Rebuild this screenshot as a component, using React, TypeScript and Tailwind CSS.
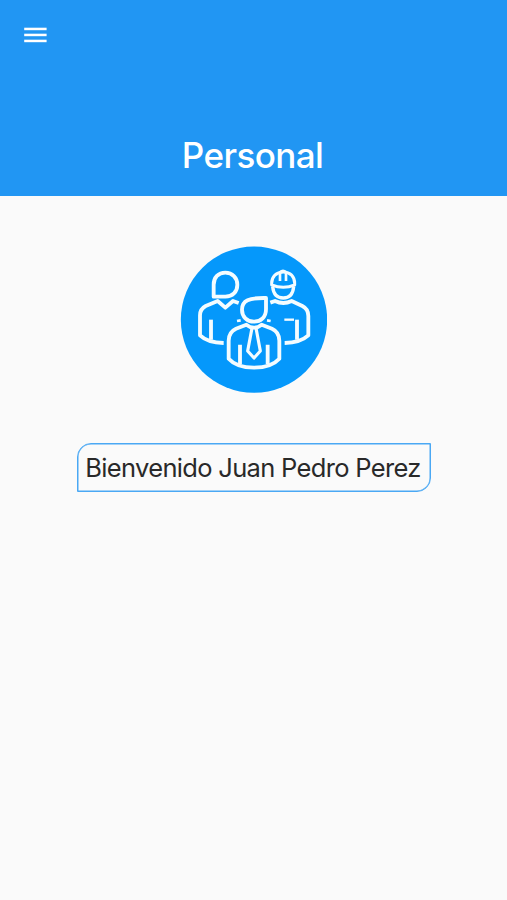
import React from 'react';

interface HeaderProps {
    title: string;
}

const MenuIcon: React.FC = () => (
    <svg viewBox="0 0 24 16" className="h-4 w-6" fill="#fff">
        <rect x="0.2" y="0.7" width="22.4" height="2.5" />
        <rect x="0.2" y="6.7" width="22.4" height="2.5" />
        <rect x="0.2" y="12.7" width="22.4" height="2.5" />
    </svg>
);

const Header: React.FC<HeaderProps> = ({ title }) => (
    <header className="flex h-[196px] flex-col justify-between bg-[#2196f3] pt-[27px] pb-[18px]">
        <button type="button" aria-label="Menu" className="ml-6 self-start">
            <MenuIcon />
        </button>
        <h1 className="pr-0.5 text-center text-[35px] leading-[46px] font-medium tracking-[-0.6px] text-white">
            {title}
        </h1>
    </header>
);

const StaffLogo: React.FC = () => (
    <svg
        viewBox="15 18 441 441"
        className="size-[147px]"
        fill="none"
        stroke="#f4fcff"
        strokeWidth="11.5"
        strokeLinejoin="round"
    >
        <circle cx="237" cy="239" r="219.5" fill="#0598fb" stroke="none" />

        {/* Left person */}
        <path d="M116 170V134C116 112 130 98 151 98C172 98 187 113 187 134C187 156 172 170 151 170Z" />
        <path d="M191 189L174 183L151 203L128 183L92 198Q75 207 75 226V286Q98 308 146 309" />
        <path d="M108 239V299" />

        {/* Worker with helmet */}
        <path d="M290 135V130C290 110 304 96 325 96C346 96 359 110 359 130V135Q325 149 290 135Z" strokeWidth="9" />
        <path d="M293 140C295 162 307 174 325 174C343 174 354 162 356 140" strokeWidth="10" />
        <path d="M315 123V97Q324 89 333 97V123" strokeWidth="8" />
        <path d="M286 188L300 183Q325 195 350 183L382 198Q400 207 400 228V286Q376 308 329 309" />
        <path d="M328 239H357" strokeWidth="7" />
        <path d="M366 239V299" />

        {/* Person with tie */}
        <path d="M273 174V208C273 231 258 245 237 245C216 245 201 230 201 209C201 181 222 173 273 174Z" />
        <path d="M186 243L197 241M276 241L287 243" strokeWidth="8" />
        <path d="M237 263Q225 263 214 254L183 266Q161 276 161 302V356Q184 382 237 383Q290 382 313 356V302Q313 276 291 266L260 254Q249 263 237 263Z" />
        <path d="M231 264L218 333L237 354L256 333L243 264" strokeWidth="9.5" />
        <path d="M195 314V373M278 314V373" />
    </svg>
);

const App: React.FC = () => (
    <div className="min-h-[900px] bg-[#fafafa] font-['Inter',sans-serif]">
        <Header title="Personal" />
        <main className="flex flex-col items-center pt-[50px]">
            <StaffLogo />
            <div className="mt-[50px] ml-px flex h-[49px] w-[354px] items-center justify-center rounded-tl-[14px] rounded-br-[14px] border border-[#4aa8f4] pt-0.5 pr-0.5 text-[25.5px] tracking-[-0.68px] whitespace-nowrap text-[#292929] shadow-[inset_0_0_0_0.5px_#4aa8f4]">
                Bienvenido Juan Pedro Perez
            </div>
        </main>
    </div>
);

export default App;
